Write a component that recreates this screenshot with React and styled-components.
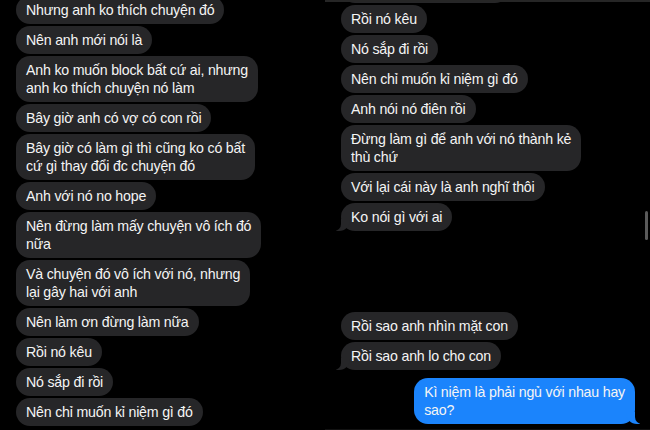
import React from 'react';
import styled, { createGlobalStyle } from 'styled-components';

const GlobalStyle = createGlobalStyle`
    html, body {
        margin: 0;
        padding: 0;
        background: #000;
    }
    body {
        font-family: 'Liberation Sans', Arial, sans-serif;
        -webkit-font-smoothing: antialiased;
    }
`;

const Screen = styled.div`
    width: 650px;
    height: 430px;
    display: flex;
    background: #000;
    overflow: hidden;
`;

const Panel = styled.div`
    position: relative;
    width: 325px;
    height: 430px;
    overflow: hidden;
    box-sizing: border-box;
    border-top: ${(p) => (p.$topBar ? '2px solid #262626' : 'none')};
    border-bottom: ${(p) => (p.$topBar ? '1px solid #121212' : 'none')};
`;

const Thread = styled.div`
    display: flex;
    flex-direction: column;
    align-items: flex-start;
    gap: 2px;
    padding: 0 15px 0 16px;
    margin-top: ${(p) => p.$offset}px;
`;

const Bubble = styled.div`
    position: relative;
    max-width: 235px;
    padding: 5px 10px;
    border-radius: 14px;
    background: ${(p) => (p.$mine ? '#1b84fc' : '#262628')};
    color: #f4f4f4;
    font-size: 14.2px;
    line-height: 18px;
    letter-spacing: -0.2px;
    white-space: pre-line;
    align-self: ${(p) => (p.$mine ? 'flex-end' : 'flex-start')};
    margin-top: ${(p) => p.$gapAbove || 0}px;

    ${(p) =>
        p.$tail &&
        !p.$mine &&
        `
        &::before {
            content: '';
            position: absolute;
            bottom: 0;
            left: -5px;
            width: 14px;
            height: 12px;
            background: #262628;
            border-bottom-right-radius: 11px;
        }
        &::after {
            content: '';
            position: absolute;
            bottom: 0;
            left: -9px;
            width: 9px;
            height: 14px;
            background: #000;
            border-bottom-right-radius: 7px;
        }
    `}

    ${(p) =>
        p.$tail &&
        p.$mine &&
        `
        &::before {
            content: '';
            position: absolute;
            bottom: 0;
            right: -5px;
            width: 14px;
            height: 12px;
            background: #1b84fc;
            border-bottom-left-radius: 11px;
        }
        &::after {
            content: '';
            position: absolute;
            bottom: 0;
            right: -9px;
            width: 9px;
            height: 14px;
            background: #000;
            border-bottom-left-radius: 7px;
        }
    `}
`;

/* bottom sliver of the bubble scrolled out above the right thread */
const ClippedBubble = styled.div`
    width: ${(p) => p.$width}px;
    height: 28px;
    border-radius: 14px;
    background: #262628;
`;

const Scrollbar = styled.div`
    position: absolute;
    right: 2px;
    top: 209px;
    width: 3px;
    height: 29px;
    border-radius: 2px;
    background: #5a5a5a;
`;

const leftMessages = [
    { text: 'Nhưng anh ko thích chuyện đó' },
    { text: 'Nên anh mới nói là' },
    { text: 'Anh ko muốn block bất cứ ai, nhưng\nanh ko thích chuyện nó làm' },
    { text: 'Bây giờ anh có vợ có con rồi' },
    { text: 'Bây giờ có làm gì thì cũng ko có bất\ncứ gì thay đổi đc chuyện đó' },
    { text: 'Anh với nó no hope' },
    { text: 'Nên đừng làm mấy chuyện vô ích đó\nnữa' },
    { text: 'Và chuyện đó vô ích với nó, nhưng\nlại gây hai với anh' },
    { text: 'Nên làm ơn đừng làm nữa' },
    { text: 'Rồi nó kêu' },
    { text: 'Nó sắp đi rồi' },
    { text: 'Nên chỉ muốn kỉ niệm gì đó' },
];

const rightMessages = [
    { text: 'Rồi nó kêu' },
    { text: 'Nó sắp đi rồi' },
    { text: 'Nên chỉ muốn kỉ niệm gì đó' },
    { text: 'Anh nói nó điên rồi' },
    { text: 'Đừng làm gì để anh với nó thành kẻ\nthù chứ' },
    { text: 'Với lại cái này là anh nghĩ thôi' },
    { text: 'Ko nói gì với ai', tail: true },
    { text: 'Rồi sao anh nhìn mặt con', gap: 79 },
    { text: 'Rồi sao anh lo cho con', tail: true },
    { text: 'Kì niệm là phải ngủ với nhau hay\nsao?', mine: true, tail: true, gap: 6 },
];

const App = () => {
    return (
        <Screen>
            <GlobalStyle />
            <Panel>
                <Thread $offset={-4}>
                    {leftMessages.map((m, i) => (
                        <Bubble key={i} $tail={m.tail} $mine={m.mine} $gapAbove={m.gap}>
                            {m.text}
                        </Bubble>
                    ))}
                </Thread>
            </Panel>
            <Panel $topBar>
                <Thread $offset={-27}>
                    <ClippedBubble $width={168} />
                    {rightMessages.map((m, i) => (
                        <Bubble key={i} $tail={m.tail} $mine={m.mine} $gapAbove={m.gap}>
                            {m.text}
                        </Bubble>
                    ))}
                </Thread>
                <Scrollbar />
            </Panel>
        </Screen>
    );
};

export default App;
